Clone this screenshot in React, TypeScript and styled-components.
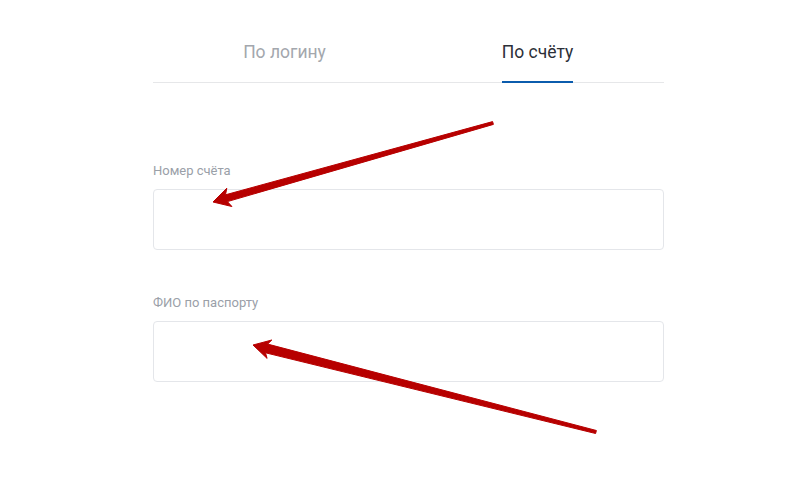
import styled, { createGlobalStyle } from "styled-components"

const GlobalStyle = createGlobalStyle`
  html, body {
    margin: 0;
    padding: 0;
    background: #ffffff;
  }
  body {
    font-family: Roboto, "Liberation Sans", sans-serif;
    width: 809px;
    height: 480px;
    overflow: hidden;
  }
`

const Page = styled.div`
  position: relative;
  width: 809px;
  height: 480px;
  padding-left: 153px;
  box-sizing: border-box;
`

const Form = styled.div`
  width: 511px;
  display: flex;
  flex-direction: column;
`

const TabRow = styled.div`
  display: grid;
  grid-template-columns: 1fr 1fr;
  padding-left: 5px;
  border-bottom: 1px solid #e6e7e9;
  margin-bottom: 80px;
`

const Tab = styled.div`
  display: flex;
  justify-content: center;
`

const TabLabel = styled.span<{ $active?: boolean }>`
  display: inline-block;
  padding: 40px 0 17px;
  margin-bottom: -1px;
  font-size: 17.5px;
  line-height: 24px;
  color: ${(p) => (p.$active ? "#2c3038" : "#a3a7ad")};
  border-bottom: 2px solid ${(p) => (p.$active ? "#0b5cad" : "transparent")};
`

const Field = styled.div`
  display: flex;
  flex-direction: column;
  gap: 10px;
  margin-bottom: 45px;
`

const Label = styled.label`
  font-size: 13px;
  line-height: 16px;
  color: #9aa0a8;
`

const Input = styled.div`
  height: 61px;
  box-sizing: border-box;
  border: 1px solid #e4e6ea;
  border-radius: 4px;
  background: #fff;
`

const Overlay = styled.svg`
  position: absolute;
  left: 0;
  top: 0;
  pointer-events: none;
`

type Pt = [number, number]

function arrowPoints(tail: Pt, tip: Pt, tailW: number, neckW: number, headLen: number, headW: number) {
  const dx = tip[0] - tail[0]
  const dy = tip[1] - tail[1]
  const len = Math.hypot(dx, dy)
  const ux = dx / len
  const uy = dy / len
  const nx = -uy
  const ny = ux
  const neck: Pt = [tip[0] - ux * headLen, tip[1] - uy * headLen]
  const back: Pt = [tip[0] - ux * (headLen + 3), tip[1] - uy * (headLen + 3)]
  const pts: Pt[] = [
    [tail[0] + (nx * tailW) / 2, tail[1] + (ny * tailW) / 2],
    [neck[0] + (nx * neckW) / 2, neck[1] + (ny * neckW) / 2],
    [back[0] + (nx * headW) / 2, back[1] + (ny * headW) / 2],
    tip,
    [back[0] - (nx * headW) / 2, back[1] - (ny * headW) / 2],
    [neck[0] - (nx * neckW) / 2, neck[1] - (ny * neckW) / 2],
    [tail[0] - (nx * tailW) / 2, tail[1] - (ny * tailW) / 2],
  ]
  return pts.map((p) => p.map((v) => v.toFixed(1)).join(",")).join(" ")
}

function Arrow({ tail, tip, neckW }: { tail: Pt; tip: Pt; neckW: number }) {
  return (
    <polygon
      points={arrowPoints(tail, tip, 3, neckW, 14, 19)}
      fill="#b70000"
      stroke="#b70000"
      strokeWidth={1}
      strokeLinejoin="round"
    />
  )
}

export default function App() {
  return (
    <>
      <GlobalStyle />
      <Page>
        <Form>
          <TabRow>
            <Tab>
              <TabLabel>По логину</TabLabel>
            </Tab>
            <Tab>
              <TabLabel $active>По счёту</TabLabel>
            </Tab>
          </TabRow>
          <Field>
            <Label>Номер счёта</Label>
            <Input />
          </Field>
          <Field>
            <Label>ФИО по паспорту</Label>
            <Input />
          </Field>
        </Form>
        <Overlay width={809} height={480} viewBox="0 0 809 480">
          <Arrow tail={[493, 123]} tip={[213, 202]} neckW={7} />
          <Arrow tail={[596, 432]} tip={[253, 345]} neckW={9} />
        </Overlay>
      </Page>
    </>
  )
}
